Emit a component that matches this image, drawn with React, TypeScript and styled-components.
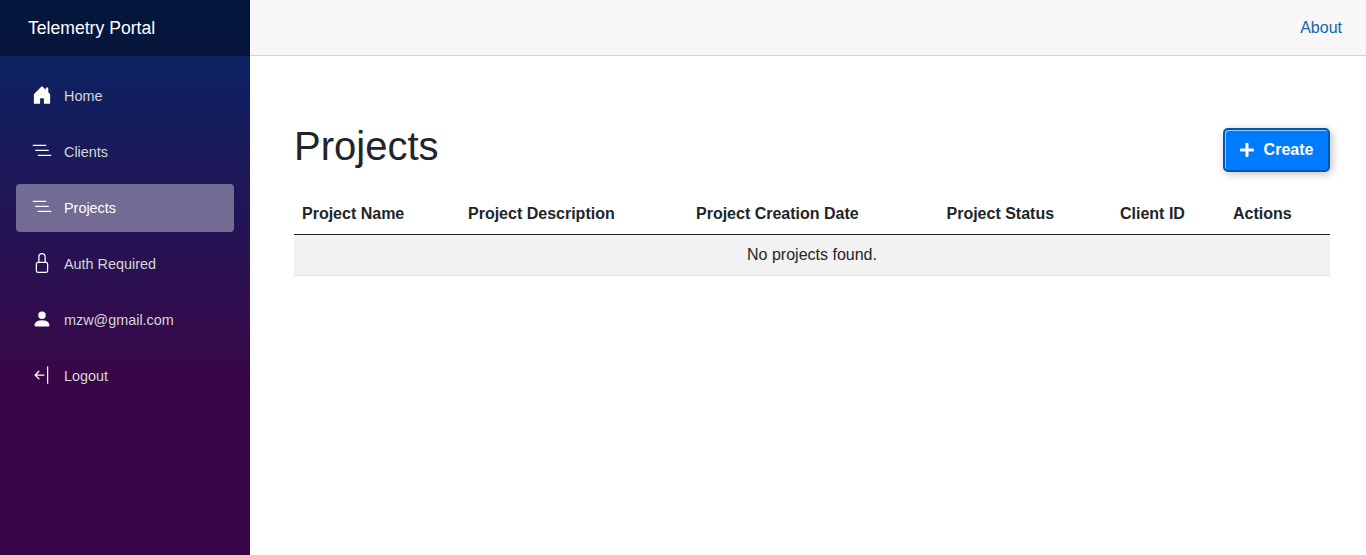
import React from "react";
import styled, { createGlobalStyle } from "styled-components";
import { FaPlus } from "react-icons/fa";

const GlobalStyle = createGlobalStyle`
  *, *::before, *::after { box-sizing: border-box; }
  body {
    margin: 0;
    background: #fff;
    color: #212529;
    font: 400 16px/1.5 "Liberation Sans", Arial, sans-serif;
  }
`;

const Page = styled.div`
  display: flex;
  min-height: 100vh;
`;

const Sidebar = styled.aside`
  width: 250px;
  height: 100vh;
  flex: none;
  background-image: linear-gradient(180deg, rgb(5, 39, 103) 0%, #3a0647 70%);
`;

const Brand = styled.div`
  display: flex;
  align-items: center;
  height: 56px;
  padding-left: 28px;
  background: rgba(0, 0, 0, 0.4);
  color: #fff;
  font-size: 17.6px;
`;

const Nav = styled.nav`
  display: flex;
  flex-direction: column;
  gap: 8px;
  padding: 16px;
`;

const NavLink = styled.a<{ $active?: boolean }>`
  display: flex;
  align-items: center;
  gap: 12px;
  height: 48px;
  padding: 0 16px;
  border-radius: 4px;
  font-size: 14.4px;
  line-height: 48px;
  color: ${({ $active }) => ($active ? "#fff" : "#d7d7d7")};
  background: ${({ $active }) => ($active ? "rgba(255, 255, 255, 0.37)" : "transparent")};
`;

const NavIcon = styled.svg`
  width: 20px;
  height: 20px;
  margin-top: -2px;
  fill: #fff;
`;

const Main = styled.main`
  flex: 1;
  min-width: 0;
`;

const TopBar = styled.header`
  display: flex;
  align-items: center;
  justify-content: flex-end;
  height: 56px;
  padding-right: 24px;
  background: #f7f7f7;
  border-bottom: 1px solid #d6d5d5;
`;

const AboutLink = styled.a`
  color: #0f66a9;
`;

const Content = styled.article`
  padding: 72px 36px 0 44px;
`;

const Heading = styled.div`
  display: flex;
  align-items: flex-start;
  justify-content: space-between;
  height: 65px;
`;

const Title = styled.h1`
  margin: -6px 0 0;
  font-size: 40px;
  font-weight: 400;
  line-height: 48px;
`;

const CreateButton = styled.button`
  display: flex;
  align-items: center;
  justify-content: center;
  gap: 10px;
  width: 107px;
  height: 44px;
  padding: 0;
  border: 2px solid #0056b3;
  border-radius: 5px;
  background: #007bff;
  color: #fff;
  font: 700 16px/24px "Liberation Sans", Arial, sans-serif;
  box-shadow: 2px 2px 8px rgba(0, 0, 0, 0.25), inset 1px 1px 0 rgba(255, 255, 255, 0.6);
`;

const PlusIcon = styled(FaPlus)`
  width: 14px;
  height: 16px;
  margin-top: -1px;
`;

const Table = styled.table`
  width: 100%;
  table-layout: fixed;
  border-collapse: collapse;
`;

const HeadCell = styled.th<{ $width: number }>`
  width: ${({ $width }) => $width}px;
  height: 41px;
  padding: 9px 8px 7px;
  text-align: left;
  white-space: nowrap;
  border-bottom: 1px solid #212529;
`;

const EmptyCell = styled.td`
  height: 41px;
  padding: 8px;
  text-align: center;
  background: #f2f2f2;
  border-bottom: 1px solid #dee2e6;
`;

const icons = {
  home: "M6.5 14.5v-3.505c0-.245.25-.495.5-.495h2c.25 0 .5.25.5.5v3.5a.5.5 0 0 0 .5.5h4a.5.5 0 0 0 .5-.5v-7a.5.5 0 0 0-.146-.354L13 5.793V2.5a.5.5 0 0 0-.5-.5h-1a.5.5 0 0 0-.5.5v1.293L8.354 1.146a.5.5 0 0 0-.708 0l-6 6A.5.5 0 0 0 1.5 7.5v7a.5.5 0 0 0 .5.5h4a.5.5 0 0 0 .5-.5Z",
  list: "M4.5 11.5A.5.5 0 0 1 5 11h10a.5.5 0 0 1 0 1H5a.5.5 0 0 1-.5-.5zm-2-4A.5.5 0 0 1 3 7h10a.5.5 0 0 1 0 1H3a.5.5 0 0 1-.5-.5zm-2-4A.5.5 0 0 1 1 3h10a.5.5 0 0 1 0 1H1a.5.5 0 0 1-.5-.5z",
  lock: "M8 1a2 2 0 0 1 2 2v4H6V3a2 2 0 0 1 2-2zm3 6V3a3 3 0 0 0-6 0v4a2 2 0 0 0-2 2v5a2 2 0 0 0 2 2h6a2 2 0 0 0 2-2V9a2 2 0 0 0-2-2zM5 8h6a1 1 0 0 1 1 1v5a1 1 0 0 1-1 1H5a1 1 0 0 1-1-1V9a1 1 0 0 1 1-1z",
  person: "M3 14s-1 0-1-1 1-4 6-4 6 3 6 4-1 1-1 1zm5-6a3 3 0 1 0 0-6 3 3 0 0 0 0 6",
  logout: "M12.5 15a.5.5 0 0 1-.5-.5v-13a.5.5 0 0 1 1 0v13a.5.5 0 0 1-.5.5ZM10 8a.5.5 0 0 1-.5.5H3.707l2.147 2.146a.5.5 0 0 1-.708.708l-3-3a.5.5 0 0 1 0-.708l3-3a.5.5 0 1 1 .708.708L3.707 7.5H9.5a.5.5 0 0 1 .5.5Z",
};

const links: { label: string; icon: keyof typeof icons; active?: boolean }[] = [
  { label: "Home", icon: "home" },
  { label: "Clients", icon: "list" },
  { label: "Projects", icon: "list", active: true },
  { label: "Auth Required", icon: "lock" },
  { label: "mzw@gmail.com", icon: "person" },
  { label: "Logout", icon: "logout" },
];

const columns = [
  { label: "Project Name", width: 166 },
  { label: "Project Description", width: 228 },
  { label: "Project Creation Date", width: 250.5 },
  { label: "Project Status", width: 173.5 },
  { label: "Client ID", width: 113 },
  { label: "Actions", width: 105 },
];

export default function App() {
  return (
    <Page>
      <GlobalStyle />
      <Sidebar>
        <Brand>Telemetry Portal</Brand>
        <Nav>
          {links.map(({ label, icon, active }) => (
            <NavLink key={label} $active={active}>
              <NavIcon viewBox="0 0 16 16" aria-hidden="true">
                <path fillRule="evenodd" d={icons[icon]} />
              </NavIcon>
              <span>{label}</span>
            </NavLink>
          ))}
        </Nav>
      </Sidebar>
      <Main>
        <TopBar>
          <AboutLink>About</AboutLink>
        </TopBar>
        <Content>
          <Heading>
            <Title>Projects</Title>
            <CreateButton>
              <PlusIcon />
              Create
            </CreateButton>
          </Heading>
          <Table>
            <thead>
              <tr>
                {columns.map(({ label, width }) => (
                  <HeadCell key={label} $width={width}>{label}</HeadCell>
                ))}
              </tr>
            </thead>
            <tbody>
              <tr>
                <EmptyCell colSpan={6}>No projects found.</EmptyCell>
              </tr>
            </tbody>
          </Table>
        </Content>
      </Main>
    </Page>
  );
}
